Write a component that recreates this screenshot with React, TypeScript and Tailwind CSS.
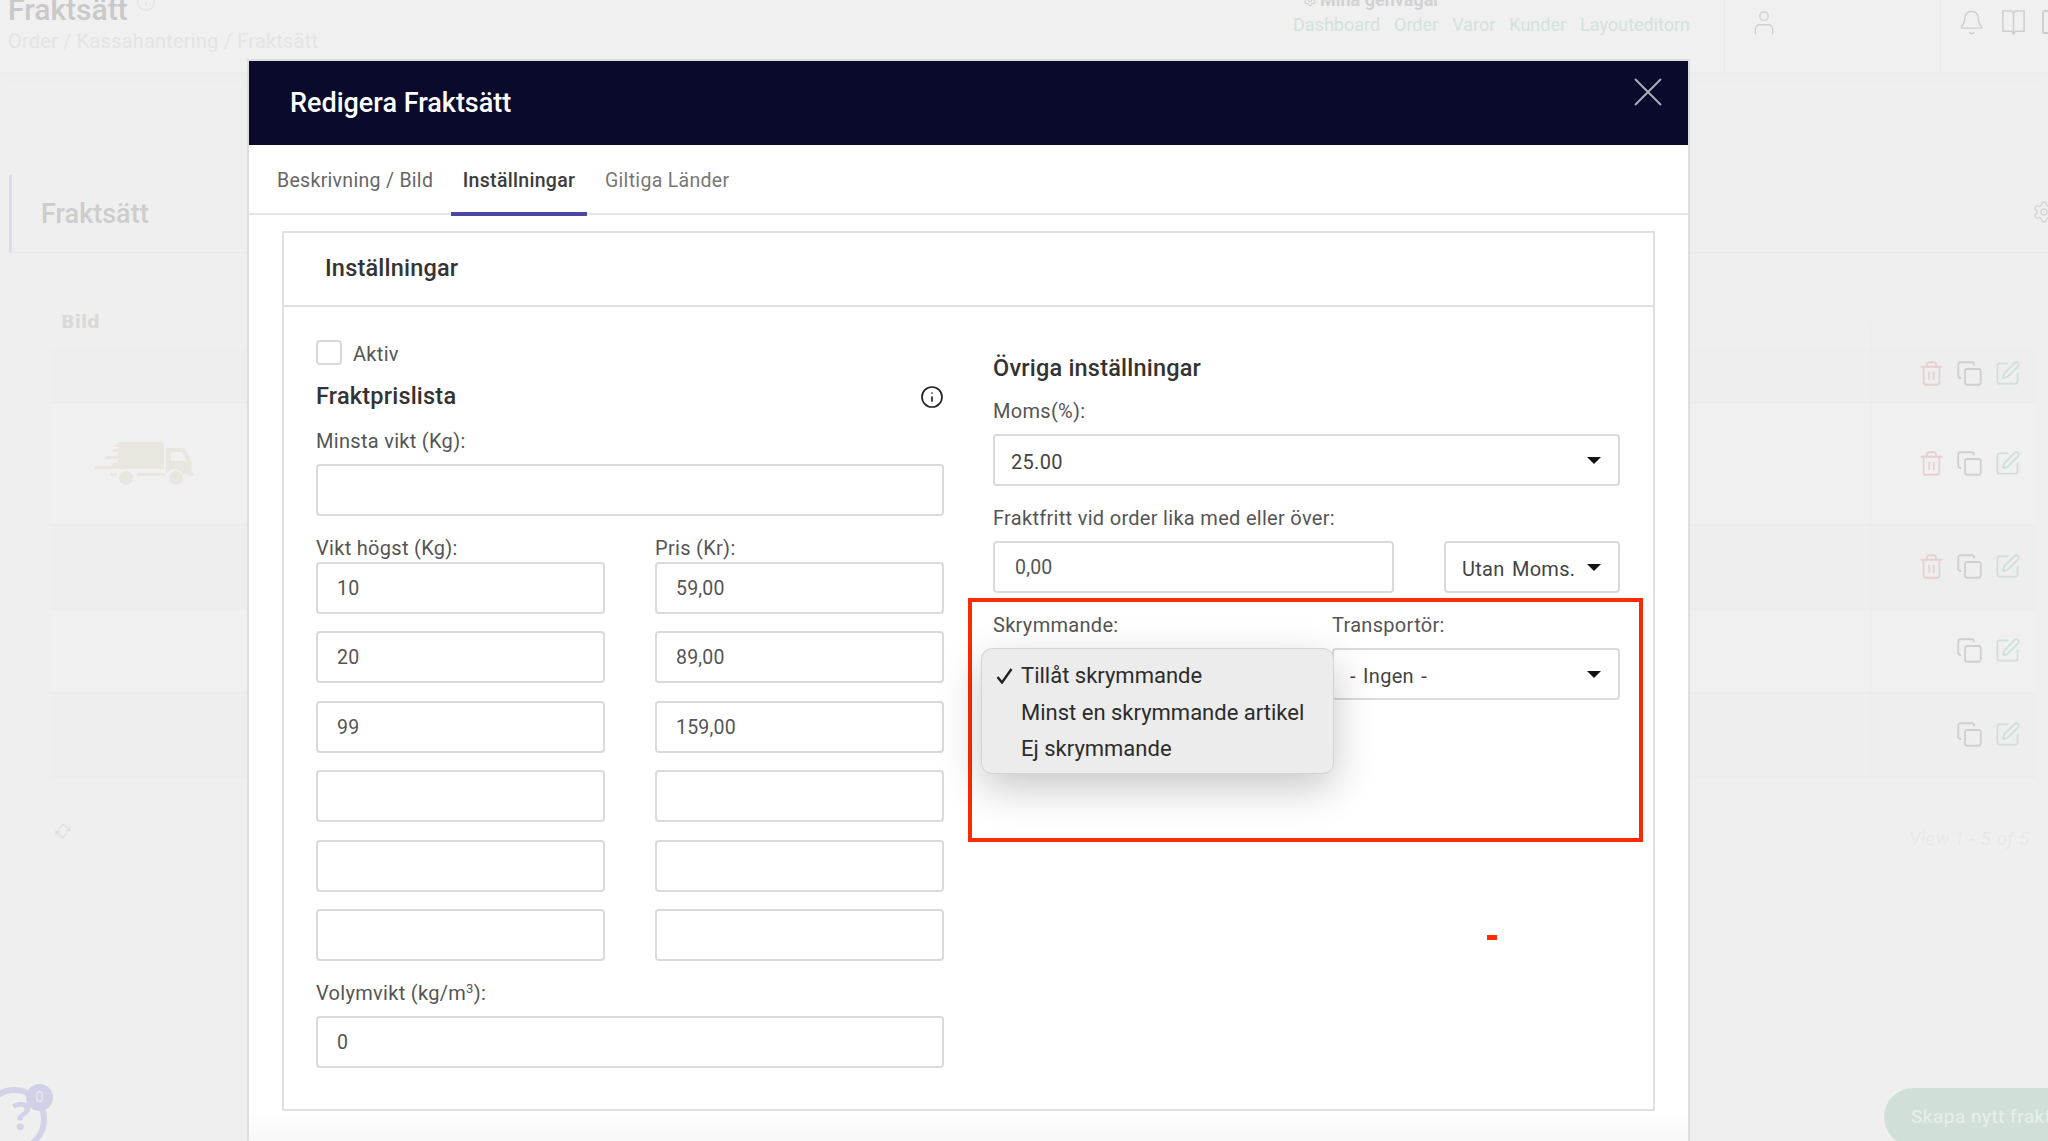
import { Bell, Copy, Info, Settings, SquarePen, Trash2, Repeat2 } from 'lucide-react'

const rows = [
  { h: 54, dark: true, trash: true, iconTop: 11 },
  { h: 122, dark: false, trash: true, truck: true, iconTop: 47 },
  { h: 85, dark: true, trash: true, iconTop: 28 },
  { h: 83, dark: false, trash: false, iconTop: 27 },
  { h: 85, dark: true, trash: false, iconTop: 28 },
]

const weights = ['10', '20', '99', '', '', '']
const prices = ['59,00', '89,00', '159,00', '', '', '']

function Truck() {
  return (
    <svg viewBox="0 0 98 44" className="w-[98px] h-[44px] fill-[#e9e6df]">
      <path d="M23 3a3 3 0 0 1 3-3h40a3 3 0 0 1 3 3v24H22v-3h-6l2-3h5v-4H8l3-3h12v-4H16l3-3h4V5h-5l5-3z" />
      <path d="M0 24h22v3H0z" />
      <path d="M72 6h17l7 12 1 13h3v3H94l-1-2H88a10 10 0 0 0-17 0V6zm4 4v9h16l-5-9z" fillRule="evenodd" />
      <path d="M16 31h6a10 10 0 0 0-1 3h-5zM42 31h28v3H42z" />
      <circle cx="31" cy="36" r="7" />
      <circle cx="81" cy="36" r="7" />
    </svg>
  )
}

function TextInput({ value = '', className = '' }: { value?: string; className?: string }) {
  return (
    <input
      readOnly
      value={value}
      className={`h-[52px] border-2 border-[#dadada] rounded-[4px] bg-white pl-[19px] pt-[1px] text-[19.5px] tracking-[0.2px] text-[#555] outline-none ${className}`}
    />
  )
}

function SelectBox({ label, className = '' }: { label: string; className?: string }) {
  return (
    <div className={`h-[52px] border-2 border-[#dadada] rounded-[4px] bg-white pl-[16px] pr-[17px] flex items-center justify-between ${className}`}>
      <span className="text-[20px] tracking-[0.3px] text-[#444] mt-[4px] [word-spacing:2px]">{label}</span>
      <span className="w-0 h-0 border-x-[7px] border-x-transparent border-t-[7px] border-t-[#111] mt-[0px]" />
    </div>
  )
}

function Label({ children, className = '' }: { children: React.ReactNode; className?: string }) {
  return <div className={`h-[24px] leading-[26px] text-[20px] tracking-[0.3px] text-[#555] ${className}`}>{children}</div>
}

export default function App() {
  return (
    <div className="relative h-[1141px] w-[2048px] overflow-hidden bg-[#efefef] [font-family:Roboto,sans-serif]">
      {/* Page behind the modal */}
      <header className="h-[72px] flex bg-[#f0f0f0] shadow-[0_6px_12px_rgba(0,0,0,0.015)]">
        <div className="pl-[8px] -mt-[10px]">
          <div className="flex items-start gap-[8px]">
            <span className="text-[30px] leading-[40px] font-medium text-[#c9c9c9]">Fraktsätt</span>
            <Info className="w-[20px] h-[20px] text-[#e2e2e2] mt-[2px]" strokeWidth={1.5} />
          </div>
          <div className="text-[20px] leading-[26px] mt-[-2px] tracking-[0.2px] text-[#e4e4e4]">Order / Kassahantering / Fraktsätt</div>
        </div>
        <div className="ml-auto flex h-full">
          <div className="pr-[34px] -mt-[10px]">
            <div className="flex items-center gap-[3px] pl-[10px] text-[18px] leading-[20px] font-bold text-[#d2d2d2]">
              <Settings className="w-[14px] h-[14px]" strokeWidth={2} />
              <span>Mina genvägar</span>
            </div>
            <div className="flex gap-[14px] text-[18px] leading-[24px] mt-[3px] text-[#d3e2dc]">
              <span>Dashboard</span>
              <span>Order</span>
              <span>Varor</span>
              <span>Kunder</span>
              <span>Layouteditorn</span>
            </div>
          </div>
          <div className="w-[217px] border-x border-[#eaeaea] pl-[28px] pt-[10px]">
            <svg viewBox="0 0 24 30" className="w-[22px] h-[26px] fill-none stroke-[#cfcfcf] stroke-[1.6]">
              <circle cx="12" cy="7" r="5" />
              <path d="M2 28v-6a5 5 0 0 1 5-5h10a5 5 0 0 1 5 5v6" />
            </svg>
          </div>
          <div className="w-[107px] flex gap-[15px] pl-[17px] pt-[9px]">
            <Bell className="w-[27px] h-[27px] shrink-0 text-[#cfcfcf]" strokeWidth={1.3} />
            <svg viewBox="0 0 26 28" className="w-[27px] h-[27px] shrink-0 fill-none stroke-[#cfcfcf] stroke-[1.6]">
              <path d="M2 2h9l2 2 2-2h9v21H15l-2 3-2-3H2zM13 4v22" />
            </svg>
            <span className="w-[14px] h-[24px] shrink-0 border-2 border-[#cfcfcf] rounded-[2px] mt-[1px]" />
          </div>
        </div>
      </header>

      <div className="mt-[103px] ml-[9px] h-[78px] border-l-[3px] border-l-[#dcdcef] border-b border-b-[#eaeaea] flex items-center justify-between pl-[29px]">
        <span className="text-[27px] font-medium text-[#cdcdcd] mt-[1px]">Fraktsätt</span>
        <Settings className="w-[24px] h-[24px] text-[#d4d4d4] -mr-[8px] -mt-[4px]" strokeWidth={1.4} />
      </div>

      <div className="ml-[50px] w-[1986px] mt-[56px] h-[24px] flex items-center">
        <span className="pl-[11px] text-[18px] font-bold text-[#d9d9d9] [font-family:'DejaVu_Sans',sans-serif]">Bild</span>
      </div>
      <div className="relative ml-[50px] w-[1986px] mt-[16px]">
        <div className="absolute top-[-26px] left-[1820px] w-px h-[455px] bg-[#ebebeb]" />
        {rows.map((r, i) => (
          <div
            key={i}
            style={{ height: r.h }}
            className={`flex items-start border-b border-[#ebebeb] ${r.dark ? 'bg-[#eeeeee]' : 'bg-[#f0f0f0]'}`}
          >
            {r.truck && (
              <div className="ml-[45px] mt-[39px]">
                <Truck />
              </div>
            )}
            <div style={{ marginTop: r.iconTop }} className="ml-auto mr-[15px] flex items-center gap-[11px]">
              {r.trash && <Trash2 className="w-[27px] h-[27px] text-[#e7d0d0]" strokeWidth={1.6} />}
              <Copy className="w-[27px] h-[27px] text-[#cfcfcf]" strokeWidth={1.6} />
              <SquarePen className="w-[27px] h-[27px] text-[#cfe0d9]" strokeWidth={1.6} />
            </div>
          </div>
        ))}
      </div>
      <div className="ml-[50px] w-[1980px] mt-[44px] flex items-start justify-between">
        <Repeat2 className="w-[18px] h-[18px] ml-[4px] text-[#dfe0df] -rotate-45" />
        <span className="mt-[5px] text-[17px] italic text-[#e8e8e8] tracking-[0.4px] [font-family:Inter,sans-serif]">View 1 - 5 of 5</span>
      </div>

      {/* Help bubble */}
      <div className="absolute left-[-18px] top-[1087px] w-[65px] h-[65px] rounded-full border-[6px] border-[#d3d3e8] flex items-center justify-center pl-[14px]">
        <span className="text-[40px] leading-none font-bold text-[#d3d3e8] -mt-[10px] [font-family:'Open_Sans',sans-serif]">?</span>
      </div>
      <div className="absolute left-[26px] top-[1084px] w-[27px] h-[27px] rounded-full bg-[#d0d0e6] flex items-center justify-center text-[15px] text-[#e9e9f2]">0</div>

      {/* Create button */}
      <div className="absolute left-[1884px] top-[1088px] w-[260px] h-[58px] rounded-full bg-[#d0e0d9] pl-[27px] flex items-center text-[19px] tracking-[0.5px] text-[#e8efeb] whitespace-nowrap">
        Skapa nytt fraktsätt
      </div>

      {/* Modal */}
      <div className="absolute left-[249px] top-[61px] w-[1439px] h-[1080px] bg-white shadow-[0_0_0_2px_#dedede] flex flex-col">
        <div className="h-[84px] shrink-0 bg-[#0a0a2c] flex items-center justify-between pl-[41px] pr-[26px]">
          <h2 className="text-[27px] font-medium text-white">Redigera Fraktsätt</h2>
          <svg viewBox="0 0 28 28" className="w-[28px] h-[28px] -mt-[22px] stroke-[#adadb8] stroke-[2]">
            <path d="M1 1l26 26M27 1L1 27" />
          </svg>
        </div>

        <div className="h-[70px] shrink-0 flex border-b-2 border-[#e6e6e6] text-[19.5px] tracking-[0.3px]">
          <div className="w-[202px] pl-[28px] flex items-center pt-[3px] text-[#666]">Beskrivning / Bild</div>
          <div className="relative w-[136px] flex items-center justify-center pt-[3px] font-medium text-[#3c3c3c]">
            Inställningar
            <span className="absolute left-0 right-0 -bottom-[3px] h-[4px] bg-[#4a48a3]" />
          </div>
          <div className="pl-[18px] flex items-center pt-[3px] text-[#777]">Giltiga Länder</div>
        </div>

        <div className="mt-[16px] ml-[33px] w-[1373px] h-[880px] border-2 border-[#e0e0e0] shrink-0">
          <div className="h-[74px] flex items-center pl-[41px] border-b-2 border-[#e0e0e0] text-[23.5px] font-medium tracking-[0.2px] text-[#333]">
            Inställningar
          </div>

          <div className="flex pl-[32px]">
            <div className="w-[628px] pt-[33px]">
              <div className="flex items-center h-[25px]">
                <span className="w-[26px] h-[25px] border-2 border-[#d9d9d9] rounded-[4px] bg-white" />
                <span className="ml-[11px] mt-[2px] text-[20px] tracking-[0.3px] text-[#555]">Aktiv</span>
              </div>
              <div className="mt-[17px] h-[30px] flex items-center justify-between">
                <h3 className="text-[23.5px] font-medium tracking-[0.2px] text-[#333]">Fraktprislista</h3>
                <Info className="w-[24px] h-[24px] text-[#222] mr-[0px]" strokeWidth={1.7} />
              </div>
              <Label className="mt-[16px]">Minsta vikt (Kg):</Label>
              <TextInput className="w-full mt-[12px]" />
              <div className="mt-[19px] grid grid-cols-[289px_289px] gap-x-[50px]">
                <Label>Vikt högst (Kg):</Label>
                <Label>Pris (Kr):</Label>
              </div>
              <div className="mt-[3px] grid grid-cols-[289px_289px] gap-x-[50px] gap-y-[17.4px]">
                {weights.map((w, i) => (
                  <div key={i} className="contents">
                    <TextInput value={w} className="w-full" />
                    <TextInput value={prices[i]} className="w-full" />
                  </div>
                ))}
              </div>
              <Label className="mt-[19px]">
                Volymvikt (kg/m<sup className="text-[13px]">3</sup>):
              </Label>
              <TextInput value="0" className="w-full mt-[12px]" />
            </div>

            <div className="ml-[49px] w-[627px] pt-[45px]">
              <h3 className="h-[30px] leading-[32px] text-[23.5px] font-medium tracking-[0.2px] text-[#333]">Övriga inställningar</h3>
              <Label className="mt-[16px]">Moms(%):</Label>
              <SelectBox label="25.00" className="mt-[12px]" />
              <Label className="mt-[19px]">Fraktfritt vid order lika med eller över:</Label>
              <div className="mt-[12px] flex justify-between">
                <TextInput value="0,00" className="w-[401px] !pl-[20px]" />
                <SelectBox label="Utan Moms." className="w-[176px]" />
              </div>
              <div className="mt-[19px] grid grid-cols-[339px_288px]">
                <Label>Skrymmande:</Label>
                <Label>Transportör:</Label>
              </div>
              <div className="mt-[12px] grid grid-cols-[339px_288px]">
                <div className="relative">
                  <div className="absolute -left-[12px] top-0 w-[353px] h-[126px] z-10 rounded-[11px] bg-[#ececec] border border-[#d4d4d4] shadow-[0_14px_40px_rgba(0,0,0,0.22)] pt-[9px] text-[22px] leading-[36.5px] text-[#2b2b2b]">
                    <div className="relative pl-[39px]">
                      <svg viewBox="0 0 17 16" className="absolute left-[14px] top-[10px] w-[17px] h-[16px] fill-none stroke-[#222] stroke-[2.4]">
                        <path d="M1.5 9l4.5 5.5L15.5 1" />
                      </svg>
                      Tillåt skrymmande
                    </div>
                    <div className="pl-[39px]">Minst en skrymmande artikel</div>
                    <div className="pl-[39px]">Ej skrymmande</div>
                  </div>
                </div>
                <SelectBox label="- Ingen -" />
              </div>
            </div>
          </div>
        </div>

        <div className="absolute left-0 right-0 bottom-0 h-[30px] bg-gradient-to-b from-white to-[#f8f8f8]" />

        {/* Annotation from the screenshot */}
        <div className="absolute left-[719px] top-[537px] w-[675px] h-[244px] border-[4px] border-[#ff2a00]" />
        <div className="absolute left-[1238px] top-[874px] w-[10px] h-[5px] bg-[#ff2a00]" />
      </div>
    </div>
  )
}
